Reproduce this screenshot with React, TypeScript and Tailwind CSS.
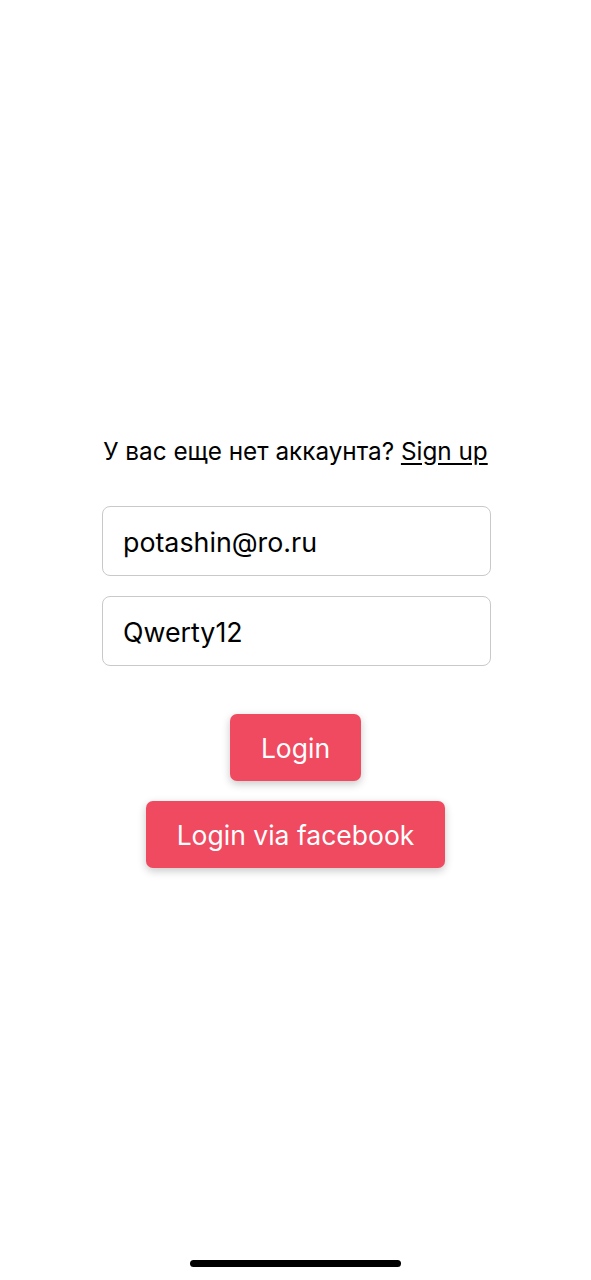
export default function App() {
  return (
    <div className="flex h-[1280px] w-full flex-col bg-white font-['Inter','Noto_Sans',sans-serif] text-black">
      <div className="h-[436px]" />
      <p className="text-center text-[24.3px] leading-[30px]">
        У вас еще нет аккаунта? <span className="underline underline-offset-[3px]">Sign up</span>
      </p>
      <div className="ml-[102px] mt-[40px] flex w-[389px] flex-col gap-[20px]">
        <div className="flex h-[70px] items-center rounded-[8px] border border-[#c9c9c9] px-[20px] pt-[2px] text-[26.8px]">
          potashin@ro.ru
        </div>
        <div className="flex h-[70px] items-center rounded-[8px] border border-[#c9c9c9] px-[20px] pt-[2px] text-[26.8px]">
          Qwerty12
        </div>
      </div>
      <div className="mt-[48px] flex flex-col items-center gap-[20px]">
        <button className="h-[67px] w-[131px] rounded-[7px] bg-[#ef4a60] pt-[3px] text-[26.5px] text-white shadow-[0_3px_8px_rgba(0,0,0,0.22)]">
          Login
        </button>
        <button className="h-[67px] w-[299px] rounded-[7px] bg-[#ef4a60] pt-[3px] text-[26.5px] text-white shadow-[0_3px_8px_rgba(0,0,0,0.22)]">
          Login via facebook
        </button>
      </div>
      <div className="flex-1" />
      <div className="mx-auto mb-[13px] h-[7px] w-[211px] rounded-full bg-black" />
    </div>
  );
}
